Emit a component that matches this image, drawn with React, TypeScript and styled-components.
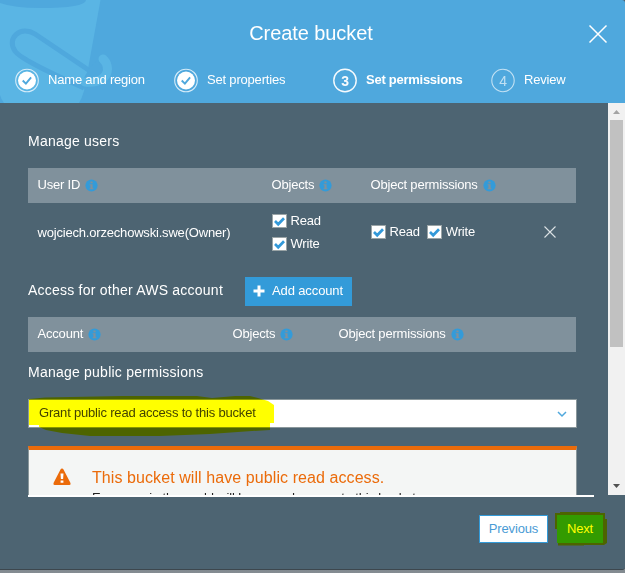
import React from 'react';
import styled, { createGlobalStyle } from 'styled-components';

const GlobalStyle = createGlobalStyle`
  * { box-sizing: border-box; }
  body {
    margin: 0;
    overflow: hidden;
    background: #7c858c;
    font-family: "Liberation Sans", Arial, sans-serif;
    font-size: 13px;
    line-height: 16px;
    letter-spacing: -0.19px;
    color: #fff;
  }
`;

const Dialog = styled.div`
  width: 625px;
  height: 573px;
  display: flex;
  flex-direction: column;
  background: linear-gradient(#4d5b66 0 20px, #7a8389 560px, #848c92);
  isolation: isolate;
`;

const Header = styled.header`
  position: relative;
  flex: 0 0 103px;
  overflow: hidden;
  border-top-right-radius: 3px;
  background: #4fa8dd;
`;

const BucketArt = styled.svg`
  position: absolute;
  left: 0;
  top: 0;
`;

const Title = styled.h1`
  position: relative;
  margin: 0;
  padding: 22px 3px 0 0;
  height: 66px;
  text-align: center;
  font-size: 20px;
  line-height: 23px;
  font-weight: 400;
  letter-spacing: -0.08px;
`;

const CloseButton = styled.button`
  position: absolute;
  left: 588px;
  top: 24px;
  padding: 0;
  border: 0;
  background: none;
  line-height: 0;
`;

const Steps = styled.ol`
  position: relative;
  display: grid;
  grid-template-columns: 159px 159px 158px 130px;
  margin: 0;
  padding: 0 0 0 14px;
  list-style: none;
`;

const Step = styled.li<{ $active?: boolean }>`
  display: flex;
  align-items: center;
  height: 27px;
  gap: 8px;
  font-weight: ${(p) => (p.$active ? 700 : 400)};
  letter-spacing: ${(p) => (p.$active ? -0.26 : -0.19)}px;
`;

const StepIcon = styled.svg`
  width: 26px;
  height: 26px;
  flex: none;
`;

const Main = styled.main`
  flex: 0 0 392px;
  display: flex;
  background: #4d6472;
`;

const Content = styled.div`
  width: 608px;
  height: 392px;
  padding: 30px 31px 0 28px;
  overflow: hidden;
`;

const Heading = styled.h2`
  margin: 0;
  font-size: 14px;
  line-height: 16px;
  font-weight: 400;
  letter-spacing: 0.23px;
  white-space: nowrap;
`;

const UsersHeading = styled(Heading)`
  margin-bottom: 19px;
`;

const PublicHeading = styled(Heading)`
  margin-top: 12px;
`;

const TableHead = styled.div<{ $cols: string }>`
  display: grid;
  grid-template-columns: ${(p) => p.$cols};
  align-items: center;
  width: 548px;
  height: 35px;
  padding: 0 0 2px 9.5px;
  background: #80919c;
`;

const HeadCell = styled.div`
  display: flex;
  align-items: center;
  gap: 5px;
  white-space: nowrap;
`;

const InfoIcon = styled.svg`
  width: 13px;
  height: 13px;
  margin-top: 1px;
`;

const UserRow = styled.div`
  display: grid;
  grid-template-columns: 234px 99px 167px 30px;
  align-items: center;
  width: 548px;
  height: 60px;
  padding: 0 0 2px 9.5px;
`;

const UserName = styled.span`
  padding-top: 2px;
`;

const Stack = styled.div`
  display: grid;
  gap: 7px;
`;

const Inline = styled.div`
  display: flex;
  gap: 7px;
`;

const CheckLabel = styled.label`
  display: flex;
  align-items: center;
  gap: 4px;
  height: 16px;
`;

const Box = styled.svg`
  width: 15px;
  height: 15px;
  flex: none;
  margin-top: 1px;
`;

const AccountBar = styled.div`
  display: flex;
  align-items: center;
  margin: 14px 0 11px;
  height: 29px;
`;

const AccountHeading = styled(Heading)`
  width: 217px;
  padding-bottom: 3px;
`;

const AddButton = styled.button`
  display: flex;
  align-items: center;
  gap: 7px;
  width: 107px;
  height: 29px;
  padding: 0 0 2px 8px;
  border: 0;
  background: #339bd9;
  color: #fff;
  font: inherit;
  letter-spacing: -0.12px;
  white-space: nowrap;
`;

const SelectBox = styled.div`
  position: relative;
  display: flex;
  align-items: center;
  justify-content: space-between;
  width: 549px;
  height: 29px;
  margin-top: 19px;
  padding: 0 9px 2px 10px;
  border: 1px solid #8a979b;
  background: #fff;
  color: #444;
`;

const Chevron = styled.svg`
  width: 10px;
  height: 10px;
  margin-top: 3px;
`;

const Marker = styled.svg<{ $x: number; $y: number }>`
  position: absolute;
  left: ${(p) => p.$x}px;
  top: ${(p) => p.$y}px;
  mix-blend-mode: multiply;
  pointer-events: none;
`;

const Alert = styled.section`
  display: flex;
  width: 549px;
  height: 90px;
  margin-top: 18px;
  padding: 17px 0 0 23px;
  gap: 20px;
  border: 1px solid #8a979b;
  border-top: 4px solid #eb6b0a;
  background: #f4f6f5;
  color: #222;
`;

const AlertTitle = styled.div`
  margin-top: 2px;
  font-size: 16px;
  line-height: 18px;
  letter-spacing: 0.08px;
  color: #eb6b0a;
  white-space: nowrap;
`;

const AlertText = styled.div`
  margin-top: 3px;
  letter-spacing: -0.15px;
  white-space: nowrap;
`;

const Scrollbar = styled.div`
  width: 17px;
  display: flex;
  flex-direction: column;
  align-items: center;
  background: #f1f1f1;
`;

const Thumb = styled.div`
  width: 13px;
  height: 227px;
  margin-bottom: auto;
  background: #c1c1c1;
`;

const Footer = styled.footer`
  flex: 0 0 75px;
  display: flex;
  flex-direction: column;
  background: #4d6472;
  border-bottom: 1px solid #3d474e;
  border-bottom-right-radius: 3px;
`;

const Divider = styled.div`
  width: 566px;
  height: 2px;
  margin: 0 0 18px 28px;
  background: #fff;
`;

const Actions = styled.div`
  display: flex;
  justify-content: flex-end;
  gap: 9px;
  padding-right: 22px;
`;

const ActionButton = styled.button<{ $primary?: boolean }>`
  position: relative;
  width: ${(p) => (p.$primary ? 46 : 69)}px;
  height: 28px;
  padding: 0 0 1px;
  border: 1px solid #339bd9;
  background: ${(p) => (p.$primary ? '#339bd9' : '#fff')};
  color: ${(p) => (p.$primary ? '#fff' : '#4a9bd5')};
  font: inherit;
  letter-spacing: -0.15px;
`;

const DoneIcon = () => (
  <StepIcon viewBox="0 0 26 26">
    <circle cx="13" cy="13.5" r="11.3" fill="none" stroke="#d5ecf9" strokeWidth="1.1" />
    <circle cx="13" cy="13.5" r="9" fill="#fff" />
    <path d="M8.700 13.500l3.200 3.200 5.200-6.400" fill="none" stroke="#4fa8dd" strokeWidth="1.9" />
  </StepIcon>
);

const NumberIcon = ({ n, faint }: { n: number; faint?: boolean }) => (
  <StepIcon viewBox="0 0 26 26" opacity={faint ? 0.65 : 0.95}>
    <circle cx="13" cy="13.5" r="11.2" fill="none" stroke="#fff" strokeWidth={faint ? 1.1 : 1.4} />
    <text x="13" y="18.6" textAnchor="middle" fontSize="14" fontWeight={faint ? 400 : 700} fill="#fff">
      {n}
    </text>
  </StepIcon>
);

const Info = () => (
  <InfoIcon viewBox="0 0 13 13">
    <circle cx="6.5" cy="6.5" r="6.1" fill="#339bd9" />
    <path d="M5.4 2.4h2.200v1.800h-2.200zM4.500 5.200h3.100v4h.9v1.100H4.500V9.200h.9V6.300h-.9z" fill="#80919c" />
  </InfoIcon>
);

const Check = ({ children }: { children: string }) => (
  <CheckLabel>
    <Box viewBox="0 0 15 15">
      <rect x=".5" y=".5" width="14" height="13" fill="#fff" stroke="#9aa4a6" />
      <path d="M3 7l3.200 3.200L12 4.200" fill="none" stroke="#3399d9" strokeWidth="2.700" />
    </Box>
    {children}
  </CheckLabel>
);

const Heads = ({ cols, names }: { cols: string; names: string[] }) => (
  <TableHead $cols={cols}>
    {names.map((name) => (
      <HeadCell key={name}>
        {name}
        <Info />
      </HeadCell>
    ))}
  </TableHead>
);

export default function App() {
  return (
    <Dialog>
      <GlobalStyle />
      <Header>
        <BucketArt width="120" height="103" viewBox="0 0 120 103">
          <path d="M0 0H100.500L84 91Q82 98 79 103H4Q1 99 0 95Z" fill="#5ab5e4" />
          <path d="M0 0H86Q85 8 40 8Q14 8 0 3Z" fill="#4fa8dd" />
          <path d="M90 71L35 34C21 25 6 38 15 51C20 59 55 75 84 88" fill="none" stroke="#4fa8dd" strokeWidth="5" />
          <path d="M90 67L98 60L103 72L96 78L86 90L80 85Z" fill="#4fa8dd" />
          <path d="M103 59C111 66 110 84 85 82" fill="none" stroke="#5ab5e4" strokeWidth="9" strokeLinecap="round" />
        </BucketArt>
        <Title>Create bucket</Title>
        <CloseButton aria-label="Close">
          <svg width="20" height="20" viewBox="0 0 20 20">
            <path d="M1.500 1.500L18.500 18.500M18.500 1.500L1.500 18.500" stroke="#fff" strokeWidth="1.500" />
          </svg>
        </CloseButton>
        <Steps>
          <Step><DoneIcon />Name and region</Step>
          <Step><DoneIcon />Set properties</Step>
          <Step $active><NumberIcon n={3} />Set permissions</Step>
          <Step><NumberIcon n={4} faint />Review</Step>
        </Steps>
      </Header>
      <Main>
        <Content>
          <UsersHeading>Manage users</UsersHeading>
          <Heads cols="234px 99px 190px" names={['User ID', 'Objects', 'Object permissions']} />
          <UserRow>
            <UserName>wojciech.orzechowski.swe(Owner)</UserName>
            <Stack>
              <Check>Read</Check>
              <Check>Write</Check>
            </Stack>
            <Inline>
              <Check>Read</Check>
              <Check>Write</Check>
            </Inline>
            <svg width="30" height="14" viewBox="0 0 30 14">
              <path d="M6.500 1.500L17.500 12.500M17.500 1.500L6.500 12.500" stroke="#dce1e4" strokeWidth="1.100" />
            </svg>
          </UserRow>
          <AccountBar>
            <AccountHeading>Access for other AWS account</AccountHeading>
            <AddButton>
              <svg width="12" height="12" viewBox="0 0 12 12">
                <path d="M4.500 0.500h3v4h4v3h-4v4h-3v-4h-4v-3h4z" fill="#fff" />
              </svg>
              Add account
            </AddButton>
          </AccountBar>
          <Heads cols="195px 106px 190px" names={['Account', 'Objects', 'Object permissions']} />
          <PublicHeading>Manage public permissions</PublicHeading>
          <SelectBox>
            Grant public read access to this bucket
            <Chevron viewBox="0 0 10 10">
              <path d="M1 3l4 4 4-4" fill="none" stroke="#4fa8dd" strokeWidth="1.500" />
            </Chevron>
            <Marker $x={-1} $y={-5} width="248" height="42" viewBox="28 395 248 42">
              <path d="M29 399L45 397.500L122 396L197 396L212 398L235 396H250L258 398L268 401L274 405V423H270V430L252 431L210 434L160 436H90L62 433L46 430L39 427V425H29Z" fill="#ff0" />
            </Marker>
          </SelectBox>
          <Alert>
            <svg width="20" height="22" viewBox="0 0 20 22">
              <path d="M10 1.500Q11 1.500 11.500 2.500L18.500 16Q19 18 17.500 18H2.500Q1 18 1.500 16L8.500 2.500Q9 1.500 10 1.500Z" fill="#eb6b0a" />
              <path d="M8.500 6.500h3l-.4 5.600H8.900zM8.600 13.400h2.800v2.400H8.600z" fill="#fff" />
            </svg>
            <div>
              <AlertTitle>This bucket will have public read access.</AlertTitle>
              <AlertText>Everyone in the world will have read access to this bucket.</AlertText>
            </div>
          </Alert>
        </Content>
        <Scrollbar>
          <svg width="17" height="17" viewBox="0 0 17 17"><path d="M5 11h7L8.500 7z" fill="#a3a3a3" /></svg>
          <Thumb />
          <svg width="17" height="17" viewBox="0 0 17 17"><path d="M5 6h7L8.500 10z" fill="#505050" /></svg>
        </Scrollbar>
      </Main>
      <Footer>
        <Divider />
        <Actions>
          <ActionButton>Previous</ActionButton>
          <ActionButton $primary>
            Next
            <Marker $x={-3} $y={-4} width="54" height="34" viewBox="555 512 54 34">
              <path d="M555 513H560V512H600V513H605V519H607V543L604 545H584V545.500H558V543H557V529H555Z" fill="#ff0" />
            </Marker>
          </ActionButton>
        </Actions>
      </Footer>
    </Dialog>
  );
}
